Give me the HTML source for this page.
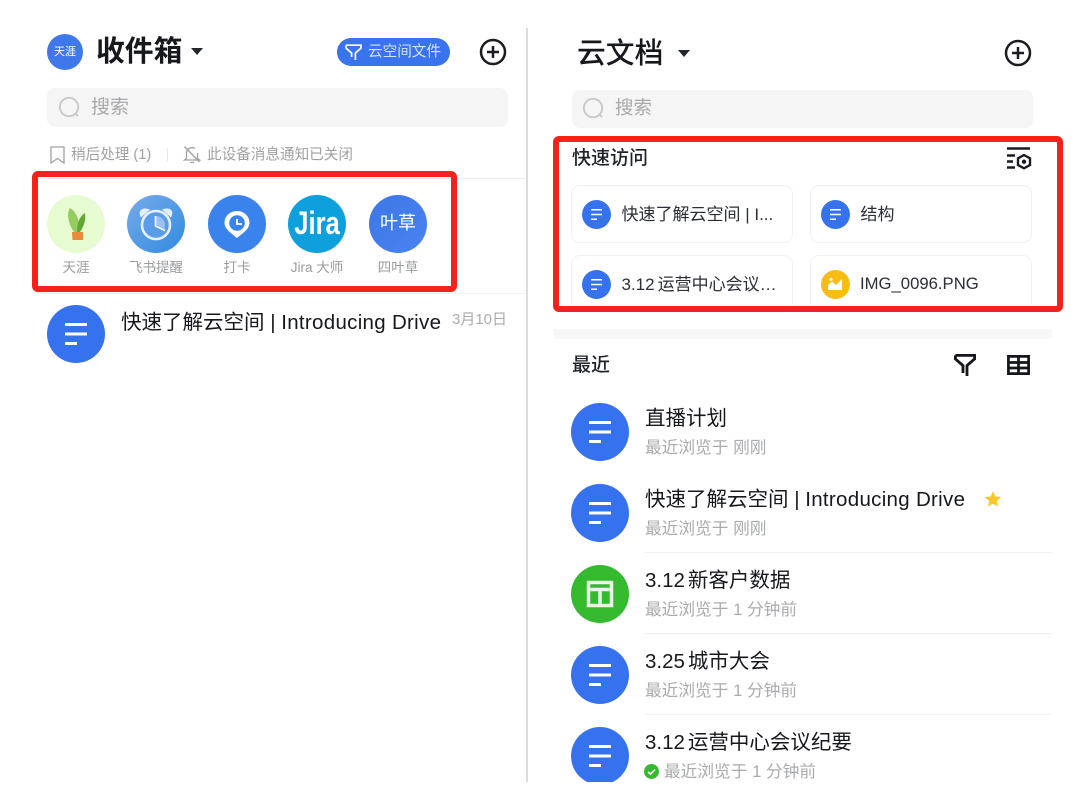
<!DOCTYPE html>
<html lang="zh">
<head>
<meta charset="utf-8">
<title>收件箱 云文档</title>
<style>
html,body{margin:0;padding:0;background:#fff}
#p{position:relative;width:1080px;height:810px;overflow:hidden;background:#fff;font-family:"Liberation Sans","Noto Sans CJK SC",sans-serif;color:#1f2329;filter:blur(.35px)}
.t{position:absolute;white-space:nowrap;line-height:1}
.a{position:absolute}
.title{font-size:20.5px;color:#16181c}
.title b{font-weight:400;letter-spacing:.3px}
.n{margin-right:3px}
.sub{font-size:16.7px;color:#a9abad}
.lab{font-size:13.5px;color:#9a9c9e;transform:translateX(-50%)}
.card{position:absolute;width:222px;height:58px;box-sizing:border-box;border:1px solid #f0f1f2;border-radius:9px;background:#fff}
.cardt{font-size:17px;color:#2b2f36}
.sep{position:absolute;left:645px;width:407px;height:1px;background:#f0f1f2}
svg{position:absolute;overflow:visible}
</style>
</head>
<body>
<div id="p">
<svg width="0" height="0" style="position:absolute">
<defs>
<symbol id="doc" viewBox="-29 -29 58 58"><circle r="29" fill="#3772ee"/><path d="M-11-9.500H11M-11 0H11M-11 9.500H1" stroke="#fff" stroke-width="3" fill="none"/></symbol>
<symbol id="plus" viewBox="0 0 28 28"><circle cx="14" cy="14" r="12" fill="none" stroke="#1a1c20" stroke-width="2.500"/><path d="M14 8V20M8 14H20" stroke="#1a1c20" stroke-width="2.500"/></symbol>
<symbol id="srch" viewBox="0 0 24 24"><circle cx="11.500" cy="11.500" r="9.600" fill="none" stroke="#c8c9ca" stroke-width="2"/><path d="M18.500 18.500L21 21" stroke="#c8c9ca" stroke-width="2"/></symbol>
</defs>
</svg>

<!-- left panel -->
<div class="a" style="left:47px;top:34px;width:36px;height:36px;border-radius:50%;background:#3f78e8"></div>
<div class="t" style="left:54px;top:46.500px;font-size:11px;color:#fff">天涯</div>
<div class="t" style="left:96px;top:38px;font-size:28.800px;font-weight:700;color:#16181c">收件箱</div>
<svg style="left:191px;top:48px" width="12" height="8"><path d="M0 0H12L6 7Z" fill="#22252a"/></svg>

<div class="a" style="left:337px;top:38px;width:113px;height:28px;border-radius:14px;background:#3a73ee"></div>
<svg style="left:345px;top:44px" width="17" height="17" viewBox="0 0 17 17"><path d="M1 1.200H16V4.200L10.400 9V16M1 4.200V1.200M1 4.200L6.600 9V13" fill="none" stroke="#fff" stroke-width="1.700"/></svg>
<div class="t" style="left:368px;top:44.500px;font-size:14.600px;color:#d5e2fb">云空间文件</div>
<svg style="left:479px;top:38px" width="28" height="28"><use href="#plus"/></svg>

<div class="a" style="left:47px;top:88px;width:461px;height:39px;border-radius:8px;background:#f5f5f6"></div>
<svg style="left:58px;top:96px" width="23" height="23"><use href="#srch"/></svg>
<div class="t" style="left:91px;top:98px;font-size:19px;color:#a8a9aa">搜索</div>

<svg style="left:50px;top:146px" width="15" height="18" viewBox="0 0 15 18"><path d="M1 1H14V17L7.500 12.500L1 17Z" fill="none" stroke="#a0a1a3" stroke-width="1.300"/></svg>
<div class="t" style="left:71px;top:147.500px;font-size:14.600px;color:#a0a1a3">稍后处理 (1)</div>
<div class="a" style="left:167px;top:148px;width:1px;height:13px;background:#e8e8e8"></div>
<svg style="left:183px;top:145px" width="18" height="19" viewBox="0 0 18 19"><path d="M3.500 13.500V8A5.500 5.500 0 0 1 12 3.500M14.500 8V13.500L16.500 15H1.500L3.500 13.500M7 17.500H11M1.500 1.500L16.500 17" fill="none" stroke="#a0a1a3" stroke-width="1.300"/></svg>
<div class="t" style="left:207px;top:147.500px;font-size:14.600px;color:#a0a1a3">此设备消息通知已关闭</div>
<div class="a" style="left:32px;top:178px;width:494px;height:1px;background:#eeeeef"></div>
<div class="a" style="left:32px;top:293px;width:494px;height:1px;background:#f1f1f2"></div>

<!-- app row -->
<div class="a" style="left:47px;top:195px;width:58px;height:58px;border-radius:50%;background:#e6fbcf"></div>
<svg style="left:66px;top:208px" width="20" height="32" viewBox="0 0 20 32"><path d="M4 0C0 6 3 17 8 24H13C14 14 11 4 4 0Z" fill="#95cc60"/><path d="M19 5C14 8 11 14 11 24H14C18 18 20 12 19 5Z" fill="#5fa835"/><path d="M6 24H17V32H6.500Z" fill="#ea8a3c"/></svg>
<div class="t lab" style="left:76px;top:261px">天涯</div>

<div class="a" style="left:127px;top:195px;width:58px;height:58px;border-radius:50%;background:linear-gradient(135deg,#78aaea,#2f8be0)"></div>
<svg style="left:127px;top:195px" width="58" height="58" viewBox="0 0 58 58"><path d="M14 22.500C10 16 15 11.500 23 14.500Z M44 22.500C48 16 43 11.500 35 14.500Z" fill="#e2eefb"/><circle cx="29" cy="30" r="14" fill="#5a9ce8" stroke="#e6f1fc" stroke-width="2.600"/><path d="M29 30V21A9 9 0 0 1 37 34Z" fill="#9cc3f0"/><path d="M28.500 21V31L38 35.500" fill="none" stroke="#fff" stroke-width="1.600"/></svg>
<div class="t lab" style="left:156px;top:261px">飞书提醒</div>

<div class="a" style="left:208px;top:195px;width:58px;height:58px;border-radius:50%;background:#3a83ec"></div>
<svg style="left:208px;top:195px" width="58" height="58" viewBox="0 0 58 58"><path d="M29 16C36 16 41.500 21 41.500 28C41.500 34 35 38 29 43C23 38 16.500 34 16.500 28C16.500 21 22 16 29 16Z" fill="#fff"/><circle cx="29" cy="28" r="7.800" fill="#3a83ec"/><path d="M29 24V29H34" fill="none" stroke="#fff" stroke-width="1.800"/></svg>
<div class="t lab" style="left:237px;top:261px">打卡</div>

<div class="a" style="left:288px;top:195px;width:58px;height:58px;border-radius:50%;background:#0ea0dc"></div>
<div class="t" style="left:317px;top:207px;font-size:32px;font-weight:700;color:#fff;transform:translateX(-50%) scaleX(.8)">Jira</div>
<div class="t lab" style="left:317px;top:261px">Jira 大师</div>

<div class="a" style="left:369px;top:195px;width:58px;height:58px;border-radius:50%;background:linear-gradient(135deg,#3c78e6,#4a82f2)"></div>
<div class="t" style="left:380px;top:214px;font-size:18px;color:#fff">叶草</div>
<div class="t lab" style="left:398px;top:261px">四叶草</div>

<!-- red box left -->
<div class="a" style="left:32px;top:171px;width:425px;height:121px;box-sizing:border-box;border:6px solid #f5221b;border-radius:6px"></div>

<svg style="left:47px;top:305px" width="58" height="58"><use href="#doc"/></svg>
<div class="t title" style="left:121px;top:313px">快速了解云空间 | <b>Introducing Drive</b></div>
<div class="t" style="left:452px;top:312px;font-size:15px;color:#a9abad">3月10日</div>

<div class="a" style="left:526px;top:28px;width:1.500px;height:754px;background:#dcdcdc"></div>

<!-- right panel -->
<div class="t" style="left:577px;top:40px;font-size:28.800px;font-weight:500;color:#16181c">云文档</div>
<svg style="left:678px;top:50px" width="12" height="8"><path d="M0 0H12L6 7Z" fill="#22252a"/></svg>
<svg style="left:1004px;top:39px" width="28" height="28"><use href="#plus"/></svg>

<div class="a" style="left:572px;top:90px;width:461px;height:38px;border-radius:8px;background:#f5f5f6"></div>
<svg style="left:582px;top:97px" width="23" height="23"><use href="#srch"/></svg>
<div class="t" style="left:615px;top:99px;font-size:18.500px;color:#a8a9aa">搜索</div>

<div class="t" style="left:572px;top:149px;font-size:19px;font-weight:500;color:#1f2329">快速访问</div>
<svg style="left:1006px;top:147px" width="26" height="23" viewBox="0 0 26 23"><path d="M1 1.500H24M1 8.500H9M1 14.500H7M1 20.500H9" stroke="#1a1c20" stroke-width="2.400" fill="none"/><path d="M18 8L24 11.300V18L18 21.300L12 18V11.300Z" fill="none" stroke="#1a1c20" stroke-width="2.400"/><circle cx="18" cy="14.700" r="2.200" fill="#1a1c20"/></svg>

<div style="position:absolute;left:560px;top:180px;width:490px;height:125px;overflow:hidden">
  <div class="card" style="left:11px;top:5px"></div>
  <div class="card" style="left:250px;top:5px"></div>
  <div class="card" style="left:11px;top:75px;height:70px"></div>
  <div class="card" style="left:250px;top:75px;height:70px"></div>
</div>
<svg style="left:582px;top:199.500px" width="29" height="29"><use href="#doc"/></svg>
<div class="t cardt" style="left:621.500px;top:205.500px">快速了解云空间 | I...</div>
<svg style="left:821px;top:199.500px" width="29" height="29"><use href="#doc"/></svg>
<div class="t cardt" style="left:860.500px;top:205.500px">结构</div>
<svg style="left:582px;top:269.500px" width="29" height="29"><use href="#doc"/></svg>
<div class="t cardt" style="left:621.500px;top:275.500px"><span style="margin-right:3px">3.12</span>运营中心会议…</div>
<svg style="left:821px;top:269.500px" width="29" height="29" viewBox="0 0 29 29"><circle cx="14.500" cy="14.500" r="14.500" fill="#f7bd14"/><path d="M7 20V15L11 11.500L15 15L21 9V20Z" fill="#fff"/><circle cx="10" cy="9.500" r="1.500" fill="#fff"/></svg>
<div class="t cardt" style="left:860px;top:275.500px;font-size:16.700px">IMG_0096.PNG</div>

<!-- red box right -->
<div class="a" style="left:553px;top:136px;width:510px;height:176px;box-sizing:border-box;border:6px solid #f5221b;border-radius:6px"></div>

<div class="a" style="left:554px;top:329px;width:498px;height:10px;background:#f7f7f7"></div>

<div class="t" style="left:572px;top:355.500px;font-size:19px;font-weight:500;color:#1f2329">最近</div>
<svg style="left:954px;top:354px" width="22" height="23" viewBox="0 0 22 23"><path d="M1.400 1.400H20.600V5L13 11.500V22M1.400 1.400V5L9 11.500V19" fill="none" stroke="#14161c" stroke-width="2.800"/></svg>
<svg style="left:1007px;top:355px" width="23" height="20" viewBox="0 0 23 20"><path d="M1.400 1.400H21.600V18.600H1.400ZM1.400 7.500H21.600M1.400 13H21.600M11.500 1.400V18.600" fill="none" stroke="#14161c" stroke-width="2.700"/></svg>

<div style="position:absolute;left:560px;top:390px;width:520px;height:392px;overflow:hidden">
  <svg style="left:11px;top:13px" width="58" height="58"><use href="#doc"/></svg>
  <svg style="left:11px;top:94px" width="58" height="58"><use href="#doc"/></svg>
  <svg style="left:11px;top:175px" width="58" height="58" viewBox="-29 -29 58 58"><circle r="29" fill="#35b92e"/><path d="M-11.500-11.500H11.500V11.500H-11.500ZM-11.500-4.500H11.500M0-4.500V11.500" fill="none" stroke="#e6f7e4" stroke-width="3.500"/></svg>
  <svg style="left:11px;top:256px" width="58" height="58"><use href="#doc"/></svg>
  <svg style="left:11px;top:337px" width="58" height="58"><use href="#doc"/></svg>
</div>

<div class="t title" style="left:645px;top:409px">直播计划</div>
<div class="t sub" style="left:645px;top:439.500px">最近浏览于 刚刚</div>
<div class="t title" style="left:645px;top:490px">快速了解云空间 | <b>Introducing Drive</b></div>
<svg style="left:984px;top:490px" width="18" height="18" viewBox="0 0 24 24"><path d="M12 1.500L15.200 8.600L23 9.400L17.100 14.600L18.800 22.200L12 18.300L5.200 22.200L6.900 14.600L1 9.400L8.800 8.600Z" fill="#fbc62a"/></svg>
<div class="t sub" style="left:645px;top:520.500px">最近浏览于 刚刚</div>
<div class="sep" style="top:552px"></div>
<div class="t title" style="left:645px;top:571px"><span class="n">3.12</span>新客户数据</div>
<div class="t sub" style="left:645px;top:601.500px">最近浏览于 1 分钟前</div>
<div class="sep" style="top:633px"></div>
<div class="t title" style="left:645px;top:652px"><span class="n">3.25</span>城市大会</div>
<div class="t sub" style="left:645px;top:682.500px">最近浏览于 1 分钟前</div>
<div class="sep" style="top:714px"></div>
<div class="t title" style="left:645px;top:733px"><span class="n">3.12</span>运营中心会议纪要</div>
<svg style="left:644px;top:764px" width="15" height="15" viewBox="0 0 15 15"><circle cx="7.500" cy="7.500" r="7.500" fill="#35b92e"/><path d="M4 7.800L6.500 10.200L11 5.500" fill="none" stroke="#fff" stroke-width="1.600"/></svg>
<div class="t sub" style="left:664px;top:763.500px">最近浏览于 1 分钟前</div>
</div>
</body>
</html>
